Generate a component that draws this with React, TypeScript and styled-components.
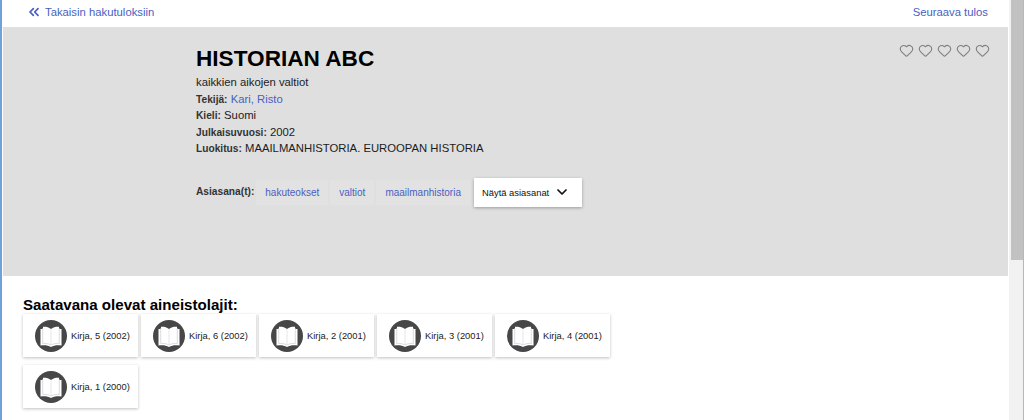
import React from 'react';
import styled, { createGlobalStyle } from 'styled-components';
import { ChevronDown, ChevronsLeft, Heart } from 'lucide-react';

const GlobalStyle = createGlobalStyle`
  html, body {
    margin: 0;
    height: 420px;
    overflow: hidden;
    background: #fff;
  }
  body {
    font-family: 'Liberation Sans', Arial, sans-serif;
    color: #111;
  }
  a {
    text-decoration: none;
  }
`;

const Frame = styled.div`
  display: flex;
  height: 420px;
  border-left: 2px solid #6fa3d8;
  border-right: 1px solid #8fc4e0;
  box-sizing: border-box;
`;

const Page = styled.main`
  flex: 1;
  min-width: 0;
  padding-left: 1px;
`;

const Scrollbar = styled.div`
  width: 14px;
  background: #f1f1f1;
  margin-left: 1px;
  display: flex;
  flex-direction: column;
`;

const ScrollThumb = styled.div`
  height: 260px;
  background: #c1c1c1;
  margin-left: 2px;
`;

const TopBar = styled.nav`
  height: 27px;
  display: flex;
  align-items: center;
  justify-content: space-between;
  padding: 0 20px 4px 23px;
  box-sizing: border-box;
`;

const NavLink = styled.a`
  display: flex;
  align-items: center;
  gap: 3px;
  font-size: 11.3px;
  color: #4a5fc1;
`;

const Band = styled.section`
  height: 249px;
  background: #dfdfdf;
  display: flex;
  justify-content: space-between;
  padding: 19px 18px 0 193px;
  box-sizing: border-box;
`;

const Details = styled.div`
  display: flex;
  flex-direction: column;
`;

const Title = styled.h1`
  margin: 0 0 3px;
  font-size: 22.6px;
  line-height: 25px;
  font-weight: 700;
  color: #000;
`;

const InfoLine = styled.div`
  height: 16.5px;
  font-size: 11.3px;
  line-height: 16.5px;
  color: #1c1c1c;
`;

const Label = styled.b`
  font-weight: 700;
  font-size: 10.2px;
  line-height: 1;
  color: #333;
`;

const AuthorLink = styled.a`
  color: #4a5fc1;
`;

const TagRow = styled.div`
  display: flex;
  align-items: center;
  margin-top: 21px;
  height: 29px;
`;

const TagLabel = styled(Label)`
  margin-right: 2px;
`;

const Tag = styled.a`
  height: 25px;
  display: flex;
  align-items: center;
  padding: 0 9px;
  margin-right: 2px;
  font-size: 10px;
  color: #4a5fc1;
  background: #e2e2e2;
`;

const ShowButton = styled.button`
  width: 108px;
  height: 29px;
  margin-left: 2px;
  padding: 0 0 0 8px;
  border: 0;
  display: flex;
  align-items: center;
  justify-content: flex-start;
  gap: 5px;
  background: #fff;
  font-family: inherit;
  font-size: 9.4px;
  color: #111;
  box-shadow: 0 1px 3px rgba(0, 0, 0, 0.3);
`;

const Rating = styled.div`
  display: flex;
  gap: 4px;
  height: 15px;
  margin-top: -3px;
  color: #808080;
`;

const Available = styled.section`
  padding: 20px 0 0 20px;
`;

const SectionTitle = styled.h2`
  margin: 0;
  font-size: 15.1px;
  line-height: 18px;
  font-weight: 700;
  color: #000;
`;

const CardGrid = styled.div`
  display: flex;
  flex-wrap: wrap;
  gap: 8px 3.5px;
  width: 600px;
`;

const Card = styled.a`
  width: 114.5px;
  height: 43px;
  display: flex;
  align-items: center;
  gap: 4px;
  padding-left: 12px;
  box-sizing: border-box;
  background: #fff;
  font-size: 9.4px;
  color: #222;
  box-shadow: 0 1px 3px rgba(0, 0, 0, 0.25);
`;

const IconDisc = styled.svg`
  width: 32px;
  height: 32px;
  flex: none;
`;

const BookIcon = () => (
  <IconDisc viewBox="0 0 32 32" aria-hidden="true">
    <circle cx="16" cy="16" r="16" fill="#474747" />
    <path d="M16 9C13.5 7 10.5 6.5 8 6.8V9H5.5V25.5C9.5 24.8 13 25.2 16 27C19 25.2 22.5 24.8 26.5 25.5V9H24V6.8C21.5 6.5 18.5 7 16 9Z" fill="#fff" />
    <path d="M7.7 8V23.5C10.5 23.2 13.5 23.6 16 25C18.5 23.6 21.5 23.2 24.3 23.5V8" fill="none" stroke="#cfcbd8" strokeWidth="0.7" />
    <path d="M16 9.5V25" stroke="#dcdcdc" strokeWidth="0.7" />
  </IconDisc>
);

const formats = [
  'Kirja, 5 (2002)',
  'Kirja, 6 (2002)',
  'Kirja, 2 (2001)',
  'Kirja, 3 (2001)',
  'Kirja, 4 (2001)',
  'Kirja, 1 (2000)',
];

const tags = ['hakuteokset', 'valtiot', 'maailmanhistoria'];

const App: React.FC = () => {
  return (
    <Frame>
      <GlobalStyle />
      <Page>
        <TopBar>
          <NavLink href="#">
            <ChevronsLeft size={16} strokeWidth={2.6} />
            Takaisin hakutuloksiin
          </NavLink>
          <NavLink href="#">Seuraava tulos</NavLink>
        </TopBar>
        <Band>
          <Details>
            <Title>HISTORIAN ABC</Title>
            <InfoLine>kaikkien aikojen valtiot</InfoLine>
            <InfoLine>
              <Label>Tekijä:</Label> <AuthorLink href="#">Kari, Risto</AuthorLink>
            </InfoLine>
            <InfoLine>
              <Label>Kieli:</Label> Suomi
            </InfoLine>
            <InfoLine>
              <Label>Julkaisuvuosi:</Label> 2002
            </InfoLine>
            <InfoLine>
              <Label>Luokitus:</Label> MAAILMANHISTORIA. EUROOPAN HISTORIA
            </InfoLine>
            <TagRow>
              <TagLabel>Asiasana(t):</TagLabel>
              {tags.map(tag => (
                <Tag href="#" key={tag}>{tag}</Tag>
              ))}
              <ShowButton>
                Näytä asiasanat
                <ChevronDown size={16} strokeWidth={2.6} />
              </ShowButton>
            </TagRow>
          </Details>
          <Rating>
            {[1, 2, 3, 4, 5].map(n => (
              <Heart key={n} size={15} strokeWidth={1.8} />
            ))}
          </Rating>
        </Band>
        <Available>
          <SectionTitle>Saatavana olevat aineistolajit:</SectionTitle>
          <CardGrid>
            {formats.map(format => (
              <Card href="#" key={format}>
                <BookIcon />
                {format}
              </Card>
            ))}
          </CardGrid>
        </Available>
      </Page>
      <Scrollbar>
        <ScrollThumb />
      </Scrollbar>
    </Frame>
  );
};

export default App;
